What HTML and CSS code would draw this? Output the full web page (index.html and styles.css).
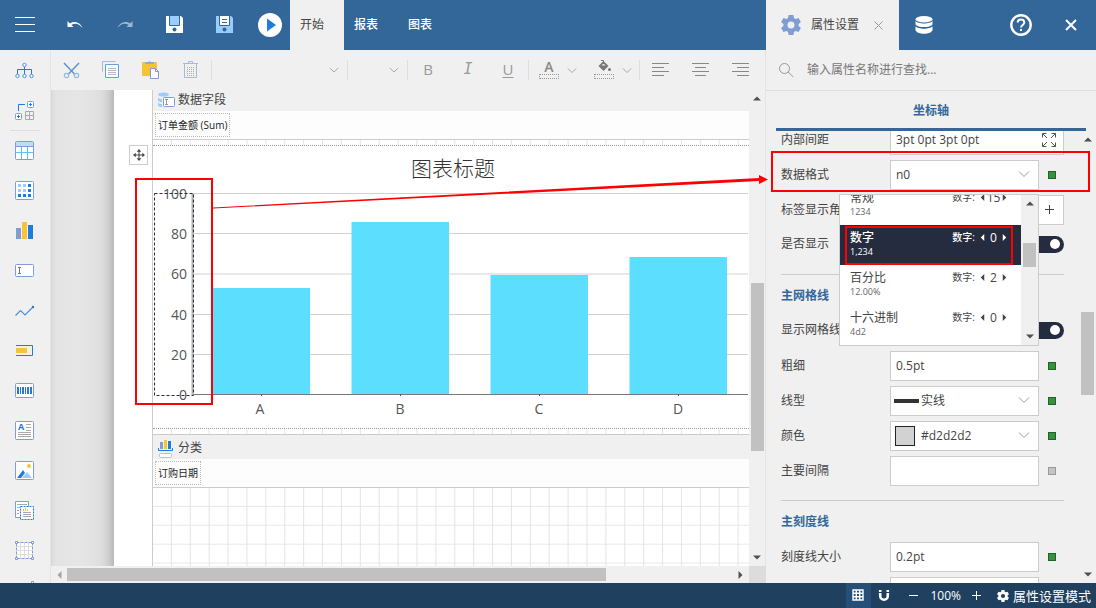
FILE: index.html
```html
<!DOCTYPE html>
<html lang="zh-CN">
<head>
<meta charset="utf-8">
<title>报表设计器</title>
<link rel="stylesheet" href="styles.css">
</head>
<body>
<svg class="defs" aria-hidden="true">
  <symbol id="chev" viewBox="0 0 12 8"><path d="M1 1.5 6 6.5 11 1.5" fill="none" stroke="currentColor"/></symbol>
  <symbol id="up" viewBox="0 0 8 5"><path d="M0 4.5 4 .5 8 4.5z" fill="currentColor"/></symbol>
  <symbol id="down" viewBox="0 0 8 5"><path d="M0 .5 4 4.5 8 .5z" fill="currentColor"/></symbol>
  <symbol id="left" viewBox="0 0 5 8"><path d="M4.5 0 .5 4 4.5 8z" fill="currentColor"/></symbol>
  <symbol id="right" viewBox="0 0 5 8"><path d="M.5 0 4.5 4 .5 8z" fill="currentColor"/></symbol>
  <symbol id="gear" viewBox="0 0 20 20"><path fill="currentColor" fill-rule="evenodd" d="M7.6 0h4.8l.6 3 1.6.9 2.9-1 2.4 4.1-2.3 2v2l2.3 2-2.4 4.1-2.9-1-1.6.9-.6 3H7.6l-.6-3-1.600-.9-2.900 1L.1 13l2.300-2V9L.1 7l2.400-4.100 2.900 1L7 3zM10 6.500a3.500 3.500 0 1 0 0 7 3.500 3.500 0 1 0 0-7z"/></symbol>
</svg>
<div class="app">
  <div class="main">
    <div class="workspace">
      <header class="topbar">
        <button class="top-btn" aria-label="菜单"><svg width="20" height="16" viewBox="0 0 20 16"><path d="M0 .5h20M0 7.500h20M0 14.500h20" stroke="#fff" fill="none"/></svg></button>
        <button class="top-btn" aria-label="撤销"><svg width="16" height="10" viewBox="0 0 16 10"><path d="M.5 1v6h6L4.400 5C8 2.600 12 3.500 15.500 8 13.500 2.500 7.500.3 2.900 3.400z" fill="#fff"/></svg></button>
        <button class="top-btn" aria-label="重做"><svg width="16" height="10" viewBox="0 0 16 10"><path d="M15.500 1v6h-6l2.100-2C8 2.600 4 3.500.5 8 2.500 2.500 8.500.3 13.100 3.400z" fill="#9db8d2"/></svg></button>
        <button class="top-btn" aria-label="保存"><svg width="18" height="18" viewBox="0 0 18 18"><path d="M0 0h15l2 2v15H0z" fill="#fff"/><path d="M3.500-1h10V9.500h-10z" fill="#99ccff" stroke="#336799"/><circle cx="8.500" cy="13.500" r="2" fill="#336799"/></svg></button>
        <button class="top-btn" aria-label="另存为"><svg width="18" height="18" viewBox="0 0 18 18"><path d="M0 0h15l2 2v15H0z" fill="#99ccff"/><path d="M3.500-1h10V9.500h-10z" fill="#fff" stroke="#336799"/><path d="M6 3.500h5M6 6.500h5" stroke="#336799"/><circle cx="8.500" cy="13.500" r="2" fill="#336799"/></svg></button>
        <button class="top-btn top-btn-play" aria-label="预览"><svg width="24" height="24" viewBox="0 0 24 24"><circle cx="12" cy="12" r="12" fill="#fff"/><path d="M9 5.500v13l9-6.500z" fill="#1e7be0"/></svg></button>
        <nav class="tabs">
          <a class="tab tab-active" href="#home">开始</a>
          <a class="tab" href="#report">报表</a>
          <a class="tab" href="#chart">图表</a>
        </nav>
      </header>
      <div class="editor">
        <aside class="toolbox">
          <button class="tool" aria-label="结构"><svg viewBox="0 0 20 20"><g fill="none" stroke="#1e7be0"><path d="M9.500 5.500v7.500M2.500 13V8.500h14V13"/><g stroke="#4a90df" fill="#fff"><circle cx="9.500" cy="4" r="1.700"/><circle cx="2.500" cy="15" r="1.700"/><circle cx="9.500" cy="15" r="1.700"/><circle cx="16.500" cy="15" r="1.700"/></g></g></svg></button>
          <button class="tool" aria-label="组件"><svg viewBox="0 0 20 20"><path d="M3.500 10V3.500H10" fill="none" stroke="#1e7be0"/><g fill="#fff" stroke="#7f9dd2"><rect x="12.500" y=".5" width="6" height="6" rx="1"/><rect x=".5" y="12.500" width="6" height="6" rx="1"/></g><path d="M14 3.500h3M15.500 2v3M2 15.500h3M3.500 14v3" stroke="#1e7be0"/><path d="M10.500 10.500h8v8h-8zM14.500 10.500v8M10.500 14.500h8" fill="none" stroke="#aaa"/></svg></button>
          <hr class="tool-sep">
          <button class="tool" aria-label="表格"><svg viewBox="0 0 20 20"><rect x=".5" y=".5" width="18" height="18" rx="1" fill="#fff"/><path d="M1 1h17v4H1z" fill="#bddcfb"/><path d="M6.500 6v12M12.500 6v12M1 11.500h17" stroke="#5cc2f7"/><path d="M1 5.500h17" stroke="#7f9dd2"/><rect x=".5" y=".5" width="18" height="18" rx="1" fill="none" stroke="#7f9dd2"/></svg></button>
          <button class="tool" aria-label="矩表"><svg viewBox="0 0 20 20"><rect x=".5" y=".5" width="18" height="18" rx="1" fill="#fff" stroke="#7f9dd2"/><path d="M3 3h3v3H3zM8 3h3v3H8zM3 8h3v3H3zM8 8h3v3H8z" fill="#99ccff"/><path d="M13 3h3v3h-3zM13 8h3v3h-3zM3 13h3v3H3zM8 13h3v3H8zM13 13h3v3h-3z" fill="#1e7be0"/></svg></button>
          <button class="tool" aria-label="图表"><svg viewBox="0 0 20 20"><path d="M1 7h5v11H1z" fill="#7f9dd2"/><path d="M7 1h5v17H7z" fill="#f6c531"/><path d="M13 4h5v14h-5z" fill="#1e7be0"/></svg></button>
          <button class="tool" aria-label="文本框"><svg viewBox="0 0 20 20"><rect x=".5" y="3.500" width="18" height="12" rx="1" fill="#fff" stroke="#7f9dd2"/><path d="M3 6.500h3M3 12.500h3M4.500 6.500v6" stroke="#777"/></svg></button>
          <button class="tool" aria-label="迷你图"><svg viewBox="0 0 20 20"><path d="M.5 14.500 5.500 9.500 10 14l8-8" fill="none" stroke="#4a90df" stroke-width="1.200"/><circle cx="18" cy="6" r="1.200" fill="#1e7be0"/></svg></button>
          <button class="tool" aria-label="数据条"><svg viewBox="0 0 20 20"><path d="M1 4.500h16.500v10H1" fill="none" stroke="#1e7be0"/><path d="M1 7h11v5H1z" fill="#f6c531"/></svg></button>
          <button class="tool" aria-label="条形码"><svg viewBox="0 0 20 20"><rect x=".5" y="2.500" width="18" height="14" rx="1" fill="#fff" stroke="#7f9dd2"/><path d="M2 6h2v7H2zM5 6h1v7H5zM7 6h2v7H7zM10 6h1v7h-1zM12 6h2v7h-2zM15 6h2v7h-2z" fill="#1e7be0"/></svg></button>
          <button class="tool" aria-label="富文本"><svg viewBox="0 0 20 20"><rect x=".5" y=".5" width="18" height="18" rx="1" fill="#fff" stroke="#7f9dd2"/><text x="3" y="9" font-size="9" font-weight="700" fill="#1e7be0">A</text><path d="M11 3.500h5M11 6.500h5M11 9.500h5M3 11.500h13M3 13.500h13M3 15.500h13" stroke="#aaa"/></svg></button>
          <button class="tool" aria-label="图像"><svg viewBox="0 0 20 20"><rect x=".5" y=".5" width="18" height="18" rx="1" fill="#fff" stroke="#7f9dd2"/><path d="m7 17 5-6 5 6z" fill="#99ccff"/><path d="M2 17 8 9l2 3-4 5z" fill="#1e7be0"/><circle cx="14" cy="5" r="2" fill="#f6c531"/></svg></button>
          <button class="tool" aria-label="子报表"><svg viewBox="0 0 20 20"><path d="M.5.5h13v16H.5z" fill="#fff" stroke="#7f9dd2"/><path d="M2 3.500h10M2 6.500h3M2 9.500h2M2 12.500h2" stroke="#aaa"/><path d="M5.500 5.500h13v13h-13z" fill="#fff" stroke="#1e7be0" stroke-dasharray="2 1"/><path d="M8.500 10V8M10.500 10V7M12.500 10V8" stroke="#f6c531"/><path d="M8 11.500h8M8 13.500h8M8 15.500h8" stroke="#aaa"/></svg></button>
          <button class="tool" aria-label="容器"><svg viewBox="0 0 20 20"><path d="M1.500 1.500h16v16h-16z" fill="#fff"/><path d="M5.500 2v15M9.500 2v15M13.500 2v15M2 5.500h15M2 9.500h15M2 13.500h15" stroke="#ddd"/><path d="M1.500 1.500h16v16h-16z" fill="none" stroke="#7f9dd2" stroke-dasharray="3 1"/><path d="M.5.5h2v2h-2zM16.500.5h2v2h-2zM.5 16.500h2v2h-2zM16.500 16.500h2v2h-2z" fill="#fff" stroke="#7f9dd2"/></svg></button>
          <button class="tool" aria-label="形状"><svg viewBox="0 0 20 20"><path d="M16.500.5h2v2h-2z" fill="#fff" stroke="#7f9dd2"/></svg></button>
        </aside>
        <div class="stage">
          <div class="toolbar">
            <button class="bar-btn" aria-label="剪切"><svg width="17" height="17" viewBox="0 0 17 17"><path d="M1 1l10.500 11M16 1 5.500 12" stroke="#5b93cf" stroke-width="1.500" fill="none"/><g fill="none" stroke="#8fb9e8" stroke-width="1.200"><circle cx="3.500" cy="13.500" r="2.200"/><circle cx="13.500" cy="13.500" r="2.200"/></g></svg></button>
            <button class="bar-btn" aria-label="复制"><svg width="18" height="18" viewBox="0 0 18 18"><path d="M.5 10.500V.5h13" fill="none" stroke="#a5b9dc"/><path d="M3.500 3.500h13v13h-13z" fill="#fff" stroke="#5fa3e6"/><path d="M6 7.500h8M6 9.500h8M6 11.500h8M6 13.500h8" stroke="#bbb"/></svg></button>
            <button class="bar-btn" aria-label="粘贴"><svg width="18" height="20" viewBox="0 0 18 20"><path d="M0 2h15v14H0z" fill="#f6c531"/><path d="M3 4V2h3a2 2 0 0 1 3 0h3v2z" fill="#8fa9d8"/><path d="M8.500 8.500h5l3 3v7h-8z" fill="#fff" stroke="#7f9dd2"/><path d="M13.500 8.500v3h3" fill="none" stroke="#7f9dd2"/></svg></button>
            <button class="bar-btn" aria-label="删除"><svg width="16" height="18" viewBox="0 0 16 18"><path d="M0 2.500h15M5.500 2V.5h4V2M1.500 3v13.500h12V3" fill="none" stroke="#a5b9dc"/><path d="M4.500 6v9M6.500 6v9M8.500 6v9M10.500 6v9" stroke="#aaa" stroke-dasharray="1 1"/></svg></button>
            <span class="select-wrap font-name"><select aria-label="字体"><option></option></select><svg class="chev"><use href="#chev"/></svg></span>
            <span class="select-wrap font-size"><select aria-label="字号"><option></option></select><svg class="chev"><use href="#chev"/></svg></span>
            <button class="bar-btn letter">B</button>
            <button class="bar-btn letter italic">I</button>
            <button class="bar-btn letter underline">U</button>
            <span class="colour-group first"><button class="colour-btn" aria-label="字体颜色"><span class="colour-letter">A</span><span class="colour-line"></span></button><button class="mini" aria-label="选择字体颜色"><svg class="chev-s"><use href="#chev"/></svg></button></span>
            <span class="colour-group"><button class="colour-btn" aria-label="填充颜色"><svg width="13" height="11" viewBox="0 0 13 11"><path d="M.5 6 5.500 1 10.500 6l-5 5z" fill="#777"/><path d="M3.500 5.500 5.500 3.500 7.500 5.500z" fill="#f0f0f0"/><path d="M5.500 4V.5H3" stroke="#777" fill="none"/><circle cx="11.500" cy="9.500" r="1.500" fill="#777"/></svg><span class="colour-line"></span></button><button class="mini" aria-label="选择填充颜色"><svg class="chev-s"><use href="#chev"/></svg></button></span>
            <div class="align-group">
              <button class="bar-btn" aria-label="左对齐"><svg width="17" height="14" viewBox="0 0 17 14"><path d="M0 .5h17M0 4.500h12M0 8.500h17M0 12.500h12" stroke="#888"/></svg></button>
              <button class="bar-btn" aria-label="居中"><svg width="17" height="14" viewBox="0 0 17 14"><path d="M0 .5h17M3 4.500h11M0 8.500h17M3 12.500h11" stroke="#888"/></svg></button>
              <button class="bar-btn" aria-label="右对齐"><svg width="17" height="14" viewBox="0 0 17 14"><path d="M0 .5h17M5 4.500h12M0 8.500h17M5 12.500h12" stroke="#888"/></svg></button>
            </div>
          </div>
          <div class="canvas-row">
            <div class="canvas">
              <div class="desk"></div>
              <div class="margin"><button class="move" aria-label="移动"><svg width="12" height="12" viewBox="0 0 12 12"><path d="M6 1v10M1 6h10" stroke="#444"/><path d="M6 0 8.300 2.700H3.700zM6 12 3.700 9.300h4.600zM0 6l2.700-2.300v4.600zM12 6 9.300 8.300V3.700z" fill="#444"/></svg></button></div>
              <div class="report">
                <div class="band band-data"><svg width="18" height="16" viewBox="0 0 18 16"><ellipse cx="6.500" cy="2.500" rx="5.500" ry="2" fill="#99ccff"/><path d="M1 5.500c1 1 2 1.500 4 1.500v3c-2 0-3-.5-4-1.500zM1 10.500c1 1 2 1.500 4 1.500v3c-2 0-3-.5-4-1.500z" fill="#99ccff"/><rect x="6.500" y="5.500" width="11" height="9" rx="1" fill="#fff" stroke="#7f9dd2"/><path d="M8 7.500h3M8 12.500h3M9.500 7.500v5" stroke="#999"/></svg><span>数据字段</span></div>
                <div class="fields"><span class="field">订单金额 (Sum)</span></div>
                <div class="grid-strip"></div>
                <div class="chart">
                  <svg width="596" height="282" viewBox="153 146 596 282" role="img" aria-label="图表标题">
                    <g stroke="#d2d2d2"><path d="M194 193.500H748M194 233.500H748M194 274H748M194 314.500H748M194 354.500H748"/></g>
                    <path d="M192.500 193V395" stroke="#b0b0b0" stroke-width="2"/>
                    <path d="M194 394.500H748" stroke="#777"/>
                    <path d="M261.500 394v2M400.500 394v2M539.500 394v2M678.500 394v2" stroke="#555"/>
                    <g fill="#5cdfff"><path d="M212.500 288H310V394H212.500zM351.500 222H449V394H351.500zM490.500 275H588V394H490.500zM629.500 257H727V394H629.500z"/></g>
                    <g class="axis" text-anchor="end"><text x="187" y="199">100</text><text x="187" y="239">80</text><text x="187" y="279">60</text><text x="187" y="320">40</text><text x="187" y="360">20</text><text x="187" y="400">0</text></g>
                    <g class="axis" text-anchor="middle"><text x="260" y="414">A</text><text x="400" y="414">B</text><text x="539" y="414">C</text><text x="678" y="414">D</text></g>
                    <text class="chart-title" x="453" y="176" text-anchor="middle">图表标题</text>
                    <rect x="154.500" y="193.500" width="39" height="202" fill="none" stroke="#262c40" stroke-dasharray="3 2"/>
                  </svg>
                </div>
                <div class="grid-strip"></div>
                <div class="band band-cat"><svg width="16" height="19" viewBox="0 0 16 19"><path d="M2 3h3v7H2z" fill="#7f9dd2"/><path d="M6 1h3v9H6z" fill="#f6c531"/><path d="M10 2h3v8h-3z" fill="#1e7be0"/><path d="M.5 9v2.500h14V9" fill="none" stroke="#1e7be0"/><rect x="1.500" y="14.500" width="12" height="4" rx="1" fill="#fff" stroke="#99ccff"/></svg><span>分类</span></div>
                <div class="fields fields-cat"><span class="field">订购日期</span></div>
                <div class="grid-area"></div>
              </div>
            </div>
            <div class="vscroll vscroll-canvas"><svg class="arrow-v"><use href="#up"/></svg><span class="thumb"></span><svg class="arrow-v"><use href="#down"/></svg></div>
          </div>
          <div class="hscroll-row">
            <div class="hscroll"><svg class="arrow-h faded"><use href="#left"/></svg><span class="thumb"></span><svg class="arrow-h"><use href="#right"/></svg></div>
            <div class="corner"></div>
          </div>
        </div>
      </div>
    </div>
    <section class="panel">
      <header class="panel-top">
        <div class="panel-tab"><svg class="tab-gear"><use href="#gear"/></svg><span>属性设置</span><button class="tab-close" aria-label="关闭标签"><svg width="9" height="9" viewBox="0 0 9 9"><path d="m.5.5 8 8M8.500.5l-8 8" stroke="#999"/></svg></button></div>
        <button class="top-btn" aria-label="数据源"><svg width="18" height="18" viewBox="0 0 18 18"><ellipse cx="9" cy="3.200" rx="8.500" ry="3.200" fill="#fff"/><path d="M.5 5c2 3.300 15 3.300 17 0v3.200c-2 3.800-15 3.800-17 0zM.5 10.200c2 3.300 15 3.300 17 0v4c-2 4.800-15 4.800-17 0z" fill="#fff"/></svg></button>
        <span class="push"></span>
        <button class="top-btn" aria-label="帮助"><svg width="22" height="22" viewBox="0 0 22 22"><circle cx="11" cy="11" r="9.700" fill="none" stroke="#fff" stroke-width="2.400"/><path d="M7.700 8.600C7.700 4.500 14.300 4.500 14.300 8.600c0 2.300-3.300 2.400-3.300 4.900" fill="none" stroke="#fff" stroke-width="2"/><path d="M10 15h2v2h-2z" fill="#fff"/></svg></button>
        <button class="top-btn" aria-label="关闭"><svg width="12" height="12" viewBox="0 0 12 12"><path d="m1 1 10 10M11 1 1 11" stroke="#fff" stroke-width="2"/></svg></button>
      </header>
      <div class="search"><svg width="15" height="15" viewBox="0 0 15 15"><circle cx="5.500" cy="5.500" r="5" fill="none" stroke="#999"/><path d="m9 9 5.500 5" stroke="#999"/></svg><input type="text" aria-label="查找属性" placeholder="输入属性名称进行查找..."></div>
      <h2 class="panel-title">坐标轴</h2>
      <div class="panel-body">
        <div class="props">
          <div class="prop prop-first"><label for="p1">内部间距</label><div class="box box-wide"><input id="p1" type="text" value="3pt 0pt 3pt 0pt"><svg width="16" height="16" viewBox="0 0 16 16"><path d="M1.500 5.500v-4h4M1.500 1.500l4.500 4.500M10.500 1.500h4v4M14.500 1.500 10 6M1.500 10.500v4h4M1.500 14.500 6 10M14.500 10.500v4h-4M14.500 14.500 10 10" fill="none" stroke="#555"/></svg></div></div>
          <div class="prop"><label for="p2">数据格式</label><div class="box"><select id="p2"><option>n0</option></select><svg class="chev"><use href="#chev"/></svg></div><i class="mark"></i>
            <div class="popup">
              <ul class="formats">
                <li class="format"><b>常规</b><span class="digits">数字:<svg><use href="#left"/></svg><em>15</em><svg><use href="#right"/></svg></span><small>1234</small></li>
                <li class="format format-on"><b>数字</b><span class="digits">数字:<svg><use href="#left"/></svg><em>0</em><svg><use href="#right"/></svg></span><small>1,234</small></li>
                <li class="format"><b>百分比</b><span class="digits">数字:<svg><use href="#left"/></svg><em>2</em><svg><use href="#right"/></svg></span><small>12.00%</small></li>
                <li class="format"><b>十六进制</b><span class="digits">数字:<svg><use href="#left"/></svg><em>0</em><svg><use href="#right"/></svg></span><small>4d2</small></li>
              </ul>
              <div class="vscroll vscroll-popup"><svg class="arrow-v"><use href="#up"/></svg><span class="thumb"></span><svg class="arrow-v"><use href="#down"/></svg></div>
            </div>
          </div>
          <div class="prop"><label for="p3">标签显示角度</label><div class="box"><input id="p3" type="text"></div><button class="plus" aria-label="增加"><svg width="9" height="9" viewBox="0 0 9 9"><path d="M4.500 0v9M0 4.500h9" stroke="#444"/></svg></button></div>
          <div class="prop prop-switch"><label for="p4">是否显示</label><input id="p4" class="switch" type="checkbox" checked></div>
          <h3 class="group">主网格线</h3>
          <div class="prop prop-switch"><label for="p5">显示网格线</label><input id="p5" class="switch" type="checkbox" checked></div>
          <div class="prop"><label for="p6">粗细</label><div class="box"><input id="p6" type="text" value="0.5pt"></div><i class="mark"></i></div>
          <div class="prop"><label for="p7">线型</label><div class="box"><span class="line-sample"></span><select id="p7" class="after-line"><option>实线</option></select><svg class="chev"><use href="#chev"/></svg></div><i class="mark"></i></div>
          <div class="prop"><label for="p8">颜色</label><div class="box"><span class="swatch"></span><select id="p8" class="after-swatch"><option>#d2d2d2</option></select><svg class="chev"><use href="#chev"/></svg></div><i class="mark"></i></div>
          <div class="prop"><label for="p9">主要间隔</label><div class="box"><input id="p9" type="text"></div><i class="mark mark-off"></i></div>
          <h3 class="group">主刻度线</h3>
          <div class="prop"><label for="p10">刻度线大小</label><div class="box"><input id="p10" type="text" value="0.2pt"></div><i class="mark"></i></div>
          <div class="prop"><label for="p11"></label><div class="box"><input id="p11" type="text" aria-label="刻度线位置"></div></div>
        </div>
        <div class="vscroll vscroll-panel"><svg class="arrow-v"><use href="#up"/></svg><span class="thumb"></span><svg class="arrow-v"><use href="#down"/></svg></div>
      </div>
    </section>
  </div>
  <footer class="status">
    <button class="status-btn status-on" aria-label="网格"><svg width="13" height="13" viewBox="0 0 13 13"><path d="M1 1h10v10H1zM4.300 1v10M7.700 1v10M1 4.300h10M1 7.700h10" fill="none" stroke="#fff" stroke-width="1.400"/></svg></button>
    <button class="status-btn" aria-label="吸附"><svg width="12" height="12" viewBox="0 0 12 12"><path d="M2.200 0v6a3.800 3.800 0 0 0 7.600 0V0" fill="none" stroke="#fff" stroke-width="2.600"/><path d="M0 2.500h12" stroke="#20405f"/></svg></button>
    <button class="status-btn zoom-out" aria-label="缩小"><svg width="9" height="9" viewBox="0 0 9 9"><path d="M0 4.500h9" stroke="#fff"/></svg></button>
    <span class="zoom">100%</span>
    <button class="status-btn zoom-in" aria-label="放大"><svg width="9" height="9" viewBox="0 0 9 9"><path d="M0 4.500h9M4.500 0v9" stroke="#fff"/></svg></button>
    <button class="mode"><svg><use href="#gear"/></svg>属性设置模式</button>
  </footer>
  <svg class="notes" width="1096" height="608" viewBox="0 0 1096 608" aria-hidden="true"><g fill="none" stroke="#f00" stroke-width="2"><path d="M136 179h76v225h-76zM772 152h317v39H772zM846 227h166v37H846z"/></g><path d="M213 207.500 759 178v-3l9 4.500-9 4.500v-3L213 208.500z" fill="#f00"/></svg>
</div>
</body>
</html>
```
FILE: styles.css
```css
* { box-sizing: border-box; }
body {
  margin: 0;
  font: 12px/16px "Open Sans", "Noto Sans CJK SC", sans-serif;
  color: #444;
  background: #f0f0f0;
}
button, input, select { font: inherit; color: inherit; margin: 0; border: 0; border-radius: 0; background: none; padding: 0; outline: 0; }
select { appearance: none; width: 100%; height: 100%; }
svg { display: block; flex: none; }
a { text-decoration: none; }
.defs { display: none; }
.app { position: relative; display: flex; flex-direction: column; height: 100vh; overflow: hidden; }
.main { display: flex; flex: 1; min-height: 0; }
.workspace { flex: 1; min-width: 0; display: flex; flex-direction: column; }

.topbar, .panel-top { display: flex; height: 50px; flex: none; background: #336799; }
.top-btn { width: 50px; display: flex; align-items: center; justify-content: center; }
.top-btn-play { width: 40px; }
.tabs { display: flex; }
.tab { width: 54px; padding-left: 10px; line-height: 50px; color: #fff; font-weight: 500; }
.tab-active { background: #f0f0f0; color: #444; font-weight: 400; }

.editor { display: flex; flex: 1; min-height: 0; }
.toolbox { width: 51px; flex: none; padding-top: 1px; border-right: 1px solid #e4e4e4; overflow: hidden; display: flex; flex-direction: column; }
.tool { height: 40px; flex: none; padding: 10px 15px; }
.tool svg { width: 20px; height: 20px; overflow: visible; }
.tool-sep { flex: none; width: 30px; height: 1px; margin: -1px 10px 0; border: 0; background: #ddd; }

.stage { flex: 1; min-width: 0; display: flex; flex-direction: column; }
.toolbar { display: flex; height: 40px; flex: none; align-items: center; border-right: 1px solid #e4e4e4; }
.bar-btn { width: 40px; height: 40px; display: flex; flex: none; align-items: center; justify-content: center; }
.letter { color: #999; font-size: 15px; padding-bottom: 2px; }
.italic { font-style: italic; font-family: "DejaVu Sans Mono", "Liberation Mono", monospace; }
.underline { text-decoration: underline; text-underline-offset: 2px; }
.select-wrap { position: relative; height: 20px; border-left: 1px solid #ddd; }
.select-wrap.font-name { width: 136px; }
.select-wrap.font-size { width: 61px; border-right: 1px solid #ddd; }
.chev { position: absolute; right: 8px; top: 9px; width: 12px; height: 8px; color: #999; pointer-events: none; }
.select-wrap .chev { top: 6px; width: 10px; }
.colour-group { display: flex; height: 20px; padding: 0 5px; }
.colour-group.first { border-left: 1px solid #ddd; }
.colour-btn { width: 30px; height: 20px; display: flex; flex-direction: column; align-items: center; justify-content: space-between; padding: 0 5px 1px; }
.colour-letter { font-size: 14px; line-height: 14px; font-weight: 600; color: #888; }
.colour-line { width: 20px; height: 5px; border: 1px dotted #999; }
.mini { width: 15px; display: flex; align-items: center; justify-content: center; }
.chev-s { width: 10px; height: 7px; color: #999; }
.align-group { display: flex; height: 20px; align-items: center; border-left: 1px solid #ddd; }

.canvas-row { display: flex; flex: 1; min-height: 0; }
.canvas { flex: 1; min-width: 0; display: flex; background: #fff; overflow: hidden; }
.desk { width: 63px; flex: none; background: linear-gradient(90deg, #d8d8d8, #e3e3e3 4px, #e6e6e6 30px, #dedede 50px, #d0d0d0 57px, #b8b8b8); }
.margin { width: 38px; flex: none; padding: 55px 0 0 15px; }
.move { width: 19px; height: 20px; border: 1px solid #ccc; background: #fff; display: flex; align-items: center; justify-content: center; }
.report { flex: 1; min-width: 0; border-left: 1px solid #ccc; display: flex; flex-direction: column; }
.band { display: flex; flex: none; align-items: center; gap: 3px; background: #f0f0f0; padding-left: 4px; }
.band-data { height: 21px; padding-bottom: 2px; }
.band-cat { height: 25px; border-top: 1px solid #ccc; gap: 4px; padding: 2px 0 0 5px; }
.fields { height: 29px; flex: none; padding: 2px; background: #fdfdfd; border-bottom: 1px solid #ccc; display: flex; align-items: flex-start; }
.field { height: 24px; padding: 0 2px; border: 1px dotted #bbb; font-size: 10px; line-height: 23px; color: #222; }
.grid-strip, .grid-area {
  background-image: linear-gradient(90deg, transparent 18px, #e4e4e4 18px), linear-gradient(transparent 18px, #e8e8e8 18px);
  background-size: 5mm 5mm;
}
.grid-strip { height: 5px; flex: none; }
.grid-area { flex: 1; }
.chart { flex: none; border: 1px dotted #999; border-width: 1px 0; overflow: hidden; height: 284px; background: #fff; }
.axis { font-size: 14px; fill: #555; font-weight: 400; }
.chart-title { font-size: 21px; fill: #333; font-weight: 300; }

.vscroll { width: 17px; flex: none; display: grid; justify-items: center; align-items: center; background: #f0f0f0; color: #505050; }
.thumb { background: #c1c1c1; align-self: stretch; justify-self: stretch; }
.arrow-v { width: 8px; height: 5px; }
.arrow-h { width: 5px; height: 8px; }
.vscroll .thumb { grid-row: 3; margin: 0 2px; }
.vscroll .arrow-v:last-child { grid-row: 5; }
.vscroll-canvas { grid-template-rows: 17px 176fr 168fr 98fr 17px; border-right: 1px solid #e4e4e4; }
.vscroll-canvas .thumb { margin: 0 1px 0 2px; }
.hscroll-row { display: flex; height: 17px; flex: none; }
.hscroll { flex: 1; display: grid; grid-template-columns: 16px 539fr 126fr 17px; align-items: center; justify-items: center; color: #505050; }
.hscroll .thumb { margin: 2px 0; }
.hscroll .arrow-h:last-child { grid-column: 4; }
.faded { color: #a3a3a3; }
.corner { width: 17px; background: #dcdcdc; }

.panel { width: 330px; flex: none; display: flex; flex-direction: column; min-height: 0; }
.panel-tab { width: 133px; background: #f0f0f0; display: flex; align-items: center; padding-left: 15px; }
.tab-gear { width: 20px; height: 20px; color: #7f9dd2; margin-right: 10px; }
.tab-close { margin-left: 15px; }
.push { flex: 1; }
.search { height: 41px; flex: none; display: flex; align-items: center; border-bottom: 1px solid #ddd; padding: 0 13px; gap: 13px; }
.search input { flex: 1; min-width: 0; }
.search input::placeholder { color: #777; opacity: 1; }
.panel-title { flex: none; margin: 0 10px; height: 40px; border-bottom: 3px solid #336799; color: #336799; font-size: 12px; line-height: 40px; font-weight: 700; text-align: center; }
.panel-body { flex: 1; min-height: 0; display: flex; overflow: hidden; }
.props { flex: 1; min-width: 0; padding: 0 15px; }
.prop { position: relative; height: 35px; display: flex; align-items: center; }
.prop-first { margin-top: -9px; }
.prop label { width: 109px; flex: none; white-space: nowrap; }
.box { position: relative; flex: 0 0 149px; min-width: 0; height: 30px; border: 1px solid #ccc; background: #fff; display: flex; align-items: center; }
.box-wide { flex: 1; padding-right: 6px; }
.box input, .box select { flex: 1; width: 100%; min-width: 0; height: 28px; padding-left: 5px; }
.mark { flex: none; width: 8px; height: 8px; margin-left: 9px; background: #399140; border: 1px solid #1d6527; }
.mark-off { background: #c4c4c4; border-color: #999; }
.plus { width: 26px; height: 30px; margin-left: -1px; border: 1px solid #ccc; background: #fff; display: flex; align-items: center; justify-content: center; padding-right: 4px; }
.prop-switch { justify-content: space-between; padding-bottom: 1px; }
.switch { appearance: none; width: 33px; height: 17px; border-radius: 9px; background: #262c40; display: flex; align-items: center; justify-content: flex-end; padding-right: 4px; }
.switch::before { content: ""; width: 10px; height: 10px; border-radius: 5px; background: #fff; }
.group { height: 39px; margin: 12px 0 0; border-top: 1px solid #ccc; padding-top: 13px; font-size: 12px; line-height: 16px; font-weight: 700; color: #336799; }
.line-sample { flex: none; width: 25px; height: 4px; margin-left: 3px; background: #333; }
.swatch { flex: none; width: 20px; height: 20px; margin-left: 4px; background: #d2d2d2; border: 1px solid #222; }
.box .after-line { padding-left: 2px; }
.box .after-swatch { padding-left: 6px; }

.popup { position: absolute; z-index: 2; left: 58px; top: 37px; width: 200px; height: 152px; border: 1px solid #ccc; background: #fff; display: flex; overflow: hidden; }
.formats { flex: 1; list-style: none; margin: -10px 0 0; padding: 0; }
.format { height: 40px; padding: 4px 14px 5px 10px; display: grid; grid-template-columns: 1fr auto; grid-template-rows: 17px 13px; }
.format b { font-weight: 400; line-height: 17px; }
.format small { font-size: 9px; line-height: 12px; color: #666; }
.format-on { background: #262c40; color: #fff; }
.format-on b, .format-on .digits { font-weight: 500; }
.format-on small { color: #fff; }
.digits { display: flex; align-items: center; font-size: 10px; line-height: 17px; }
.digits svg { width: 5px; height: 7px; }
.digits svg:first-of-type { margin-left: 5px; }
.digits em { width: 17px; font-size: 12px; font-style: normal; text-align: center; }
.vscroll-popup { grid-template-rows: 17px 31fr 24fr 60fr 17px; }
.vscroll-popup .thumb { margin-right: 2px; }
.vscroll-panel { width: 17px; grid-template-rows: 17px 164fr 82fr 171fr 17px; }

.status { height: 25px; flex: none; display: flex; justify-content: flex-end; align-items: stretch; padding-right: 5px; background: #20405f; color: #fff; }
.status-btn { width: 25px; display: flex; align-items: center; justify-content: center; }
.status-on { background: #264f78; }
.zoom-out { width: 34px; }
.zoom { line-height: 25px; }
.zoom-in { width: 32px; }
.mode { display: flex; align-items: center; gap: 4px; margin-left: 4px; font-size: 13px; }
.mode svg { width: 12px; height: 12px; }

.notes { position: absolute; left: 0; top: 0; z-index: 5; pointer-events: none; }
```
